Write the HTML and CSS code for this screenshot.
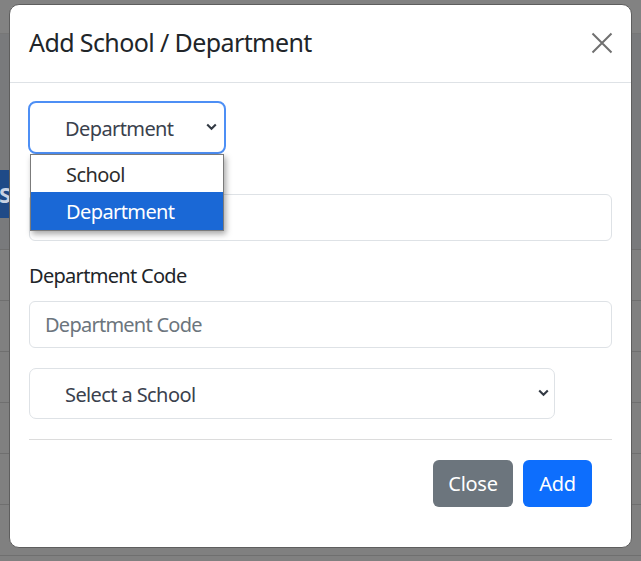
FILE: index.html
```html
<!DOCTYPE html>
<html lang="en">
<head>
<meta charset="utf-8">
<title>Add School / Department</title>
<link rel="stylesheet" href="styles.css">
</head>
<body>
<div class="page">
  <div class="page-head"></div>
  <div class="page-band">
    <div class="bg-btn">Schools</div>
  </div>
  <div class="page-row"></div>
  <div class="page-row"></div>
  <div class="page-row"></div>
  <div class="page-row"></div>
  <div class="page-row"></div>
  <div class="page-row"></div>
</div>

<div class="modal">
  <div class="modal-header">
    <h5 class="modal-title">Add School / Department</h5>
    <button class="btn-close" aria-label="Close">
      <svg width="22" height="22" viewBox="0 0 22 22"><path d="M1.5 1.5 L20.5 20.5 M20.5 1.5 L1.5 20.5" stroke="#707070" stroke-width="2" fill="none"/></svg>
    </button>
  </div>
  <div class="modal-body">
    <div class="select-wrap">
      <div class="select select-focus">
        <span>Department</span>
        <svg class="chev" width="11" height="8" viewBox="0 0 11 8"><path d="M1.2 1.5 L5.5 5.8 L9.8 1.5" stroke="#333a44" stroke-width="2.1" fill="none"/></svg>
      </div>
      <ul class="popup">
        <li class="opt">School</li>
        <li class="opt opt-active">Department</li>
      </ul>
    </div>
    <label class="label label-covered">Department Name</label>
    <div class="input"></div>
    <label class="label label-gap">Department Code</label>
    <div class="input"><span class="placeholder">Department Code</span></div>
    <div class="select select-school">
      <span>Select a School</span>
      <svg class="chev" width="11" height="8" viewBox="0 0 11 8"><path d="M1.2 1.5 L5.5 5.8 L9.8 1.5" stroke="#333a44" stroke-width="2.1" fill="none"/></svg>
    </div>
    <hr class="divider">
    <div class="actions">
      <button class="btn btn-secondary">Close</button>
      <button class="btn btn-primary">Add</button>
    </div>
  </div>
</div>
</body>
</html>
```

FILE: styles.css
```css
* { box-sizing: border-box; }

body {
  margin: 0;
  width: 641px;
  height: 561px;
  overflow: hidden;
  position: relative;
  background: #808080;
  font-family: "Noto Sans", "Open Sans", sans-serif;
}

/* dimmed page underneath */
.page {
  display: flex;
  flex-direction: column;
  height: 561px;
}
.page-head {
  height: 34px;
  background: #828282;
  border-bottom: 1px solid #777;
}
.page-band {
  height: 216px;
  background: #797a7c;
  border-bottom: 1px solid #6e6e6e;
  padding-top: 136px;
}
.bg-btn {
  width: 120px;
  height: 48px;
  background: #1f4a87;
  color: #c9d3e3;
  font-size: 22px;
  font-weight: 700;
  line-height: 48px;
  padding-left: 29px;
  margin-left: -30px;
}
.page-row {
  height: 51px;
  flex: none;
  border-bottom: 1px solid #6f6f6f;
}

/* modal */
.modal {
  position: absolute;
  left: 9px;
  top: 4px;
  width: 623px;
  height: 544px;
  background: #fff;
  border: 1px solid #5e5e5e;
  border-radius: 10px;
  display: flex;
  flex-direction: column;
}
.modal-header {
  display: flex;
  align-items: center;
  justify-content: space-between;
  padding: 19px 18px 20px 19px;
  border-bottom: 1px solid #dee2e6;
}
.modal-title {
  margin: 0;
  font-size: 25px;
  font-weight: 400;
  line-height: 37.5px;
  color: #212529;
  letter-spacing: -0.6px;
}
.btn-close {
  border: 0;
  background: transparent;
  padding: 0;
  width: 22px;
  height: 22px;
  display: flex;
}

.modal-body {
  padding: 18px 19px 40px 19px;
  display: flex;
  flex-direction: column;
}

.select-wrap {
  position: relative;
  width: 198px;
  margin-left: -1px;
}
.select {
  display: flex;
  align-items: center;
  justify-content: space-between;
  height: 52px;
  padding: 3px 7px 0 35px;
  border: 1px solid #dee2e6;
  border-radius: 7px;
  background: #fff;
  font-size: 20px;
  color: #3a414d;
  letter-spacing: -0.6px;
}
.select .chev { margin-top: -3px; }
.select-focus {
  border: 2px solid #4d8ff5;
  border-radius: 8px;
  height: 53px;
  padding-left: 35px;
  padding-right: 7px;
}
.select-school {
  width: 526px;
  height: 51px;
  padding-right: 5px;
}

.popup {
  position: absolute;
  left: 2px;
  top: 53px;
  width: 194px;
  margin: 0;
  padding: 0;
  list-style: none;
  background: #fff;
  border: 1px solid #7b7b7b;
  box-shadow: 2px 3px 6px rgba(0,0,0,0.35);
  z-index: 2;
}
.opt {
  height: 37.5px;
  line-height: 39px;
  padding-left: 35px;
  font-size: 20px;
  color: #2d2d2d;
  letter-spacing: -0.6px;
}
.opt-active {
  background: #1a68d6;
  color: #fff;
}

.label {
  display: block;
  font-size: 20px;
  line-height: 30px;
  color: #212529;
  margin-bottom: 10px;
  letter-spacing: -0.7px;
}
.label-covered { visibility: hidden; }
.label-gap { margin-top: 20px; }

.input {
  height: 47px;
  border: 1px solid #dee2e6;
  border-radius: 6px;
  padding: 0 15px;
  display: flex;
  align-items: center;
}
.input + .select { margin-top: 20px; }
.placeholder {
  font-size: 20px;
  color: #6c757d;
  letter-spacing: -0.75px;
}

.divider {
  margin: 20px 0;
  border: 0;
  border-top: 1px solid #dcdcdc;
  height: 0;
}

.actions {
  display: flex;
  justify-content: flex-end;
  gap: 10px;
  padding-right: 20px;
}
.btn {
  height: 47.5px;
  border: 0;
  border-radius: 6px;
  font-family: inherit;
  font-size: 20px;
  color: #fff;
  padding: 0;
  letter-spacing: -0.3px;
}
.btn-secondary { background: #6c757d; width: 80px; }
.btn-primary { background: #0d6efd; width: 69px; }
```
